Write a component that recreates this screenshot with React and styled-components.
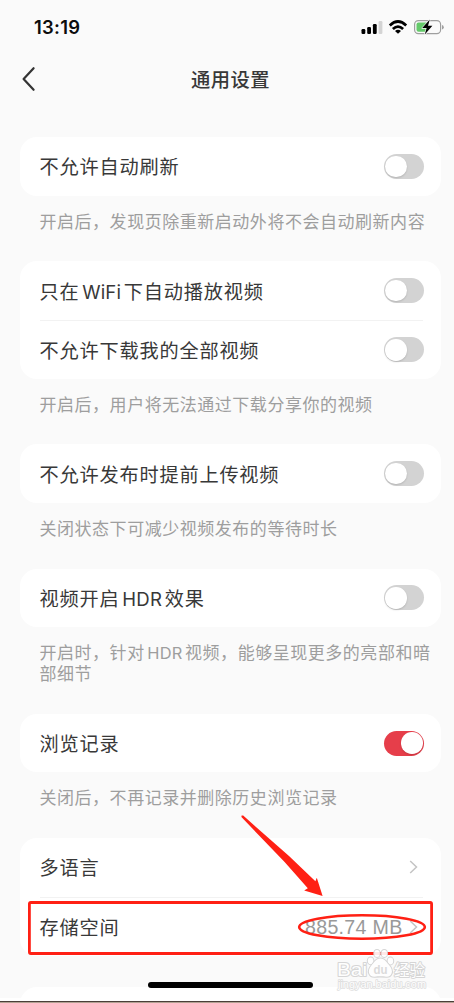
import styled, { createGlobalStyle } from 'styled-components'
import React from 'react';

const GlobalStyle = createGlobalStyle`
  html, body {
    margin: 0;
    padding: 0;
    background-color: #fafafa;
  }

  * {
    box-sizing: border-box;
  }
`

const Screen = styled.div`
  position: relative;
  width: 454px;
  height: 1003px;
  overflow: hidden;
  background-color: #fafafa;
  color: #383838;
  font-family: "Noto Sans CJK SC", sans-serif;
`

const StatusBar = styled.div`
  display: flex;
  justify-content: space-between;
  align-items: center;
  height: 54px;
  padding: 0 10px 0 34px;
`

const Clock = styled.span`
  color: #0c0c0c;
  font-family: Inter, sans-serif;
  font-size: 18.4px;
  font-weight: 600;
  letter-spacing: 0.3px;
`

const NavBar = styled.div`
  display: grid;
  grid-template-columns: 60px 1fr 60px;
  align-items: center;
  height: 50px;
`

const BackButton = styled.button`
  display: flex;
  border: none;
  background: none;
  padding: 0 0 0 21px;
`

const PageTitle = styled.h1`
  margin: 0 0 0 7px;
  text-align: center;
  font-size: 19.3px;
  line-height: 28px;
  font-weight: 500;
  letter-spacing: 0.5px;
`

const Groups = styled.div`
  display: flex;
  flex-direction: column;
  padding: 33px 13px 0 20px;
`

const Card = styled.div`
  width: 421px;
  border-radius: 17px;
  background-color: #fff;
`

const Row = styled.div`
  display: flex;
  justify-content: space-between;
  align-items: center;
  height: ${props => props.$first ? '58.6px' : '58.8px'};
  margin-left: 19.5px;
  margin-right: 18px;
  border-top: ${props => props.$first ? 'none' : '1px solid #f2f2f2'};
`

const Label = styled.span`
  font-size: 19.2px;
  line-height: 28px;
  letter-spacing: 0.8px;
  white-space: nowrap;
`

const Latin = styled.span`
  font-family: Inter, sans-serif;
  font-size: ${props => props.$size}px;
  line-height: 1;
  letter-spacing: ${props => props.$spacing || 0}px;
  margin: 0 ${props => props.$gap}px;
`

const Hint = styled.p`
  margin: 0;
  padding: 15px 0 29.8px 19.5px;
  color: #9e9e9e;
  font-size: 17px;
  line-height: 20.9px;
  letter-spacing: 0.53px;
  white-space: nowrap;
`

const Gap = styled.div`
  height: 31px;
`

const Switch = styled.div`
  display: flex;
  justify-content: ${props => props.$on ? 'flex-end' : 'flex-start'};
  align-items: center;
  width: 40.5px;
  height: 25px;
  padding: 0 1.5px;
  margin-right: -1px;
  border-radius: 13px;
  background-color: ${props => props.$on ? '#e63e4a' : '#d3d3d3'};
`

const Knob = styled.div`
  width: 21.5px;
  height: 21.5px;
  border-radius: 50%;
  background-color: #fff;
  box-shadow: 0 1px 2px rgba(0, 0, 0, 0.15);
`

const RowEnd = styled.div`
  display: flex;
  align-items: center;
  gap: 6px;
  padding-right: 5.5px;
`

const Size = styled.span`
  color: #999;
  font-family: "Liberation Sans", sans-serif;
  font-size: 19.6px;
  line-height: 28px;
  letter-spacing: 0.3px;
`

const HomeIndicator = styled.div`
  position: absolute;
  left: 148px;
  top: 982px;
  width: 165px;
  height: 6px;
  border-radius: 3px;
  background-color: #000;
`

const BottomEdge = styled.div`
  position: absolute;
  left: 0;
  right: 0;
  bottom: 0;
  height: 5px;
  border-bottom: 1px solid #b3a193;
  background: linear-gradient(#fff 3px, #4b3e38 3px);
`

const Overlay = styled.svg`
  position: absolute;
  left: 0;
  top: 0;
`

function Toggle({ on }) {
  return (
    <Switch $on={on} role="switch" aria-checked={!!on}>
      <Knob />
    </Switch>
  )
}

function Chevron() {
  return (
    <svg width="9" height="14" viewBox="0 0 9 14" fill="none" stroke="#c4c4c4" strokeWidth="1.5">
      <path d="M1.2 1 L7.5 7 L1.2 13" />
    </svg>
  )
}

function StatusIcons() {
  return (
    <svg width="84" height="20" viewBox="360 17 84 20">
      {/* sinal */}
      <rect x="361.5" y="29" width="3.8" height="5" rx="1.2" fill="#000" />
      <rect x="367.2" y="27" width="3.8" height="7" rx="1.2" fill="#000" />
      <rect x="372.9" y="24" width="3.8" height="10" rx="1.2" fill="#000" />
      <rect x="378.6" y="21" width="3.8" height="13" rx="1.2" fill="#d4d4d4" />
      {/* wifi */}
      <g fill="none" stroke="#000" strokeWidth="2.7">
        <path d="M389.8 25.4 Q398 17.6 406.2 25.4" />
        <path d="M392.9 29 Q398 24.2 403.1 29" />
      </g>
      <path d="M395 31 Q398 28.6 401 31 L398 33.8 Z" fill="#000" />
      {/* bateria carregando */}
      <rect x="414.6" y="20.6" width="26" height="13" rx="3.8" fill="none" stroke="#9f9f9f" strokeWidth="1.2" />
      <path d="M442 25 Q443.8 25.4 443.8 27.2 Q443.8 29 442 29.4 Z" fill="#9f9f9f" />
      <path d="M418.5 22.5 H427 V31.8 H418.5 Q416.5 31.8 416.5 29.8 V24.5 Q416.5 22.5 418.5 22.5 Z" fill="#65ca6b" />
      <path d="M429.8 19.6 L422.2 28.1 H426.6 L424.8 34.6 L432.4 25.8 H428 Z" fill="#000" stroke="#fafafa" strokeWidth="1.4" paintOrder="stroke" strokeLinejoin="round" />
    </svg>
  )
}

// Marcações em vermelho e a marca d'água
function Annotations() {
  return (
    <Overlay width="454" height="1003" viewBox="0 0 454 1003">
      <g fill="none" stroke="#ff2014" strokeWidth="2.8">
        <rect x="29.4" y="902.5" width="402.2" height="51" rx="1.5" />
        <ellipse cx="362" cy="927" rx="62.8" ry="11.8" strokeWidth="2.6" />
      </g>
      <path d="M241.6 815.4 L243.2 815.6 L289 856 L315.4 881.2 L316.8 877.8 L322.6 896 L304.2 890.6 L307.8 888.2 L284.6 862 L241.4 817 Z" fill="#ff2014" />

      <g fill="#fff" stroke="#d2d2d2" strokeWidth="2" strokeLinejoin="round" paintOrder="stroke" fontFamily="'Liberation Sans', 'Noto Sans CJK SC', sans-serif" opacity="0.9">
        <text x="337" y="976" fontSize="19" fontWeight="400" textLength="30" lengthAdjust="spacingAndGlyphs">Bai</text>
        <ellipse cx="370.6" cy="960.8" rx="2.8" ry="3.4" />
        <ellipse cx="377" cy="953.4" rx="2.8" ry="3.5" />
        <ellipse cx="384.3" cy="953.4" rx="2.8" ry="3.5" />
        <ellipse cx="390.4" cy="961" rx="2.8" ry="3.4" />
        <path d="M380.4 958.6 C385 958.6 386.6 962.6 389.4 965.6 C394 971 392 977 386.4 976.8 C382 976.2 378.6 976.2 374.6 976.8 C368.8 977 366.8 971 371.4 965.6 C374.2 962.6 375.8 958.6 380.4 958.6 Z" />
        <text x="373.4" y="974.2" fontSize="12.5" fontWeight="700" fill="#d8d8d8" stroke="none" textLength="14" lengthAdjust="spacingAndGlyphs">du</text>
        <text x="394" y="975.8" fontSize="15.5" fontWeight="400" strokeWidth="1.9" fontFamily="'Noto Sans CJK SC', sans-serif" textLength="31" lengthAdjust="spacingAndGlyphs">经验</text>
        <text x="338" y="987.6" fontSize="10.4" strokeWidth="1.5" stroke="#dadada" textLength="88" lengthAdjust="spacingAndGlyphs">jingyan.baidu.com</text>
      </g>
    </Overlay>
  )
}

class App extends React.Component{

  render(){
    return (
      <Screen>
        <GlobalStyle />

        <StatusBar>
          <Clock>13:19</Clock>
          <StatusIcons />
        </StatusBar>

        <NavBar>
          <BackButton>
            <svg width="15" height="26" viewBox="0 0 15 26" fill="none" stroke="#333" strokeWidth="2.2" strokeLinecap="round" strokeLinejoin="round">
              <path d="M12.6 2.2 L2.6 13 L12.6 23.8" />
            </svg>
          </BackButton>
          <PageTitle>通用设置</PageTitle>
        </NavBar>

        <Groups>
          <Card>
            <Row $first><Label>不允许自动刷新</Label><Toggle /></Row>
          </Card>
          <Hint>开启后，发现页除重新启动外将不会自动刷新内容</Hint>

          <Card>
            <Row $first>
              <Label>只在<Latin $size={18.6} $gap={2.7} $spacing={0.15}>WiFi</Latin>下自动播放视频</Label>
              <Toggle />
            </Row>
            <Row><Label>不允许下载我的全部视频</Label><Toggle /></Row>
          </Card>
          <Hint>开启后，用户将无法通过下载分享你的视频</Hint>

          <Card>
            <Row $first><Label>不允许发布时提前上传视频</Label><Toggle /></Row>
          </Card>
          <Hint>关闭状态下可减少视频发布的等待时长</Hint>

          <Card>
            <Row $first>
              <Label>视频开启<Latin $size={18.6} $gap={2.8} $spacing={0.2}>HDR</Latin>效果</Label>
              <Toggle />
            </Row>
          </Card>
          <Hint>
            开启时，针对<Latin $size={16.4} $gap={2.6} $spacing={0.2}>HDR</Latin>视频，能够呈现更多的亮部和暗<br />部细节
          </Hint>

          <Card>
            <Row $first><Label>浏览记录</Label><Toggle on /></Row>
          </Card>
          <Hint>关闭后，不再记录并删除历史浏览记录</Hint>

          <Card>
            <Row $first>
              <Label>多语言</Label>
              <RowEnd><Chevron /></RowEnd>
            </Row>
            <Row>
              <Label>存储空间</Label>
              <RowEnd><Size>885.74 MB</Size><Chevron /></RowEnd>
            </Row>
          </Card>
          <Gap />

          <Card>
            <Row $first />
          </Card>
        </Groups>

        <BottomEdge />
        <HomeIndicator />
        <Annotations />
      </Screen>
    );
  }
}

export default App;
